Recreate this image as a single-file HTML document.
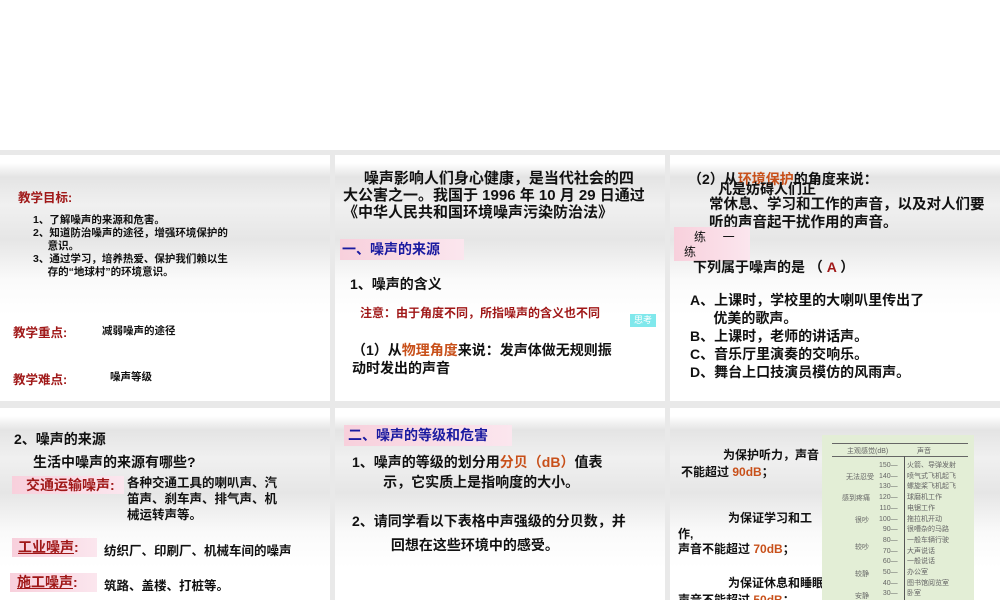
<!DOCTYPE html>
<html><head><meta charset="utf-8">
<style>
*{margin:0;padding:0;box-sizing:border-box}
body{width:1000px;height:600px;overflow:hidden;background:#fff;position:relative;font-family:"Liberation Sans","Noto Sans CJK SC",sans-serif;font-weight:bold;color:#111}
.band{position:absolute;left:0;top:150px;width:1000px;height:450px;background:#e9e9e9}
.s{position:absolute;overflow:hidden;background:linear-gradient(to bottom,#fff 0px,#fff 8px,#e4e4e4 22px,#f0f0f0 50px,#e6e6e6 85px,#fafafa 125px,#fff 160px)}
.s div{position:absolute;white-space:nowrap}
.s span,.s u{position:static}
.r{color:#a01818}.o{color:#c8501a}.b{color:#1a1aa0}
.pk{background:linear-gradient(to right,#f8d0dc,#fbe6ee)}
</style></head><body>
<div class="band"></div>

<div class="s" style="left:0;top:155px;width:330px;height:246px">
 <div class="r" style="left:18px;top:32px;font-size:12.5px">教学目标:</div>
 <div style="left:33px;top:59px;font-size:10.5px;line-height:13px">1、了解噪声的来源和危害。<br>2、知道防治噪声的途径，增强环境保护的<br>&nbsp;&nbsp;&nbsp;&nbsp;&nbsp;意识。<br>3、通过学习，培养热爱、保护我们赖以生<br>&nbsp;&nbsp;&nbsp;&nbsp;&nbsp;存的“地球村”的环境意识。</div>
 <div class="r" style="left:13px;top:167px;font-size:12.5px">教学重点:</div>
 <div style="left:102px;top:168px;font-size:10.5px">减弱噪声的途径</div>
 <div class="r" style="left:13px;top:214px;font-size:12.5px">教学难点:</div>
 <div style="left:110px;top:214px;font-size:10.5px">噪声等级</div>
</div>

<div class="s" style="left:335px;top:155px;width:330px;height:246px">
 <div style="left:8px;top:15px;font-size:15px;line-height:17px">&nbsp;&nbsp;&nbsp;&nbsp;&nbsp;噪声影响人们身心健康，是当代社会的四<br>大公害之一。我国于 1996 年 10 月 29 日通过<br>《中华人民共和国环境噪声污染防治法》</div>
 <div class="b pk" style="left:5px;top:84px;width:124px;height:21px;font-size:14px;line-height:21px;padding-left:2px">一、噪声的来源</div>
 <div style="left:15px;top:119px;font-size:14px">1、噪声的含义</div>
 <div class="r" style="left:25px;top:149px;font-size:12px">注意：由于角度不同，所指噪声的含义也不同</div>
 <div style="left:295px;top:159px;width:26px;height:13px;background:#80e8ec;color:#fff;font-size:9px;font-weight:normal;line-height:13px;text-align:center">思考</div>
 <div style="left:17px;top:186px;font-size:14px;line-height:18px">（1）从<span class="o">物理角度</span>来说：发声体做无规则振<br>动时发出的声音</div>
</div>

<div class="s" style="left:670px;top:155px;width:330px;height:246px">
 <div style="left:18px;top:14px;font-size:14px">（2）从<span class="o">环境保护</span>的角度来说：</div>
 <div style="left:48px;top:24px;font-size:14px">凡是妨碍人们正</div>
 <div style="left:39px;top:41px;font-size:14.5px;line-height:18px">常休息、学习和工作的声音，以及对人们要<br>听的声音起干扰作用的声音。</div>
 <div class="pk" style="left:4px;top:72px;width:76px;height:34px;font-size:12px;font-weight:normal;line-height:16px"><div style="left:20px;top:2px">练&nbsp;&nbsp;&nbsp;&nbsp;&nbsp;一</div><div style="left:10px;top:17px">练</div></div>
 <div style="left:23px;top:102px;font-size:14px">下列属于噪声的是 （ <span class="r">A</span> ）</div>
 <div style="left:20px;top:136px;font-size:14px;line-height:18px">A、上课时，学校里的大喇叭里传出了<br>&nbsp;&nbsp;&nbsp;&nbsp;&nbsp;&nbsp;优美的歌声。<br>B、上课时，老师的讲话声。<br>C、音乐厅里演奏的交响乐。<br>D、舞台上口技演员模仿的风雨声。</div>
</div>

<div class="s" style="left:0;top:408px;width:330px;height:192px">
 <div style="left:14px;top:21px;font-size:14px">2、噪声的来源</div>
 <div style="left:33px;top:44px;font-size:14px">生活中噪声的来源有哪些?</div>
 <div class="r pk" style="left:12px;top:68px;width:112px;height:18px;font-size:14px;line-height:18px;padding-left:14px">交通运输噪声:</div>
 <div style="left:127px;top:67px;font-size:12.5px;line-height:16px">各种交通工具的喇叭声、汽<br>笛声、刹车声、排气声、机<br>械运转声等。</div>
 <div class="r pk" style="left:12px;top:130px;width:85px;height:19px;font-size:14px;line-height:19px;padding-left:6px"><u>工业噪声</u>:</div>
 <div style="left:104px;top:132px;font-size:12.5px">纺织厂、印刷厂、机械车间的噪声</div>
 <div class="r pk" style="left:10px;top:165px;width:87px;height:19px;font-size:14px;line-height:19px;padding-left:7px"><u>施工噪声</u>:</div>
 <div style="left:104px;top:167px;font-size:12.5px">筑路、盖楼、打桩等。</div>
</div>

<div class="s" style="left:335px;top:408px;width:330px;height:192px">
 <div class="b pk" style="left:9px;top:17px;width:168px;height:21px;font-size:14px;line-height:21px;padding-left:4px">二、噪声的等级和危害</div>
 <div style="left:17px;top:44px;font-size:14px;line-height:20px">1、噪声的等级的划分用<span class="o">分贝（dB）</span>值表<br>&nbsp;&nbsp;&nbsp;&nbsp;&nbsp;&nbsp;&nbsp;&nbsp;示，它实质上是指响度的大小。</div>
 <div style="left:17px;top:101px;font-size:14px;line-height:24px">2、请同学看以下表格中声强级的分贝数，并<br>&nbsp;&nbsp;&nbsp;&nbsp;&nbsp;&nbsp;&nbsp;&nbsp;&nbsp;&nbsp;回想在这些环境中的感受。</div>
</div>

<div class="s" style="left:670px;top:408px;width:330px;height:192px">
 <div style="left:53px;top:38px;font-size:12px">为保护听力，声音</div>
 <div style="left:11px;top:55px;font-size:12px">不能超过 <span class="o">90dB</span>；</div>
 <div style="left:58px;top:101px;font-size:12px">为保证学习和工</div>
 <div style="left:8px;top:117px;font-size:12px">作,</div>
 <div style="left:8px;top:132px;font-size:12px">声音不能超过 <span class="o">70dB</span>；</div>
 <div style="left:58px;top:166px;font-size:12px">为保证休息和睡眠,</div>
 <div style="left:8px;top:183px;font-size:12px">声音不能超过 <span class="o">50dB</span>；</div>
 <div style="left:152px;top:27px;width:152px;height:170px;background:#e3eed6;font-weight:normal;color:#666;font-size:7px">
  <div style="left:10px;top:8px;width:136px;border-top:1px solid #666"></div>
  <div style="left:25px;top:11px">主观感觉(dB)</div><div style="left:95px;top:11px">声音</div>
  <div style="left:10px;top:21px;width:136px;border-top:1px solid #666"></div>
  <div style="left:82px;top:21px;height:150px;border-left:1px solid #555"></div>
  <div style="left:57px;top:26px;line-height:10.7px;text-align:right">150—<br>140—<br>130—<br>120—<br>110—<br>100—<br>90—<br>80—<br>70—<br>60—<br>50—<br>40—<br>30—</div>
  <div style="left:85px;top:26px;line-height:10.7px">火箭、导弹发射<br>喷气式飞机起飞<br>螺旋桨飞机起飞<br>球磨机工作<br>电锯工作<br>拖拉机开动<br>很嘈杂的马路<br>一般车辆行驶<br>大声说话<br>一般说话<br>办公室<br>图书馆阅览室<br>卧室</div>
  <div style="left:24px;top:37px">无法忍受</div><div style="left:20px;top:58px">感到疼痛</div>
  <div style="left:33px;top:80px">很吵</div><div style="left:33px;top:107px">较吵</div>
  <div style="left:33px;top:134px">较静</div><div style="left:33px;top:156px">安静</div>
 </div>
</div>
</body></html>
